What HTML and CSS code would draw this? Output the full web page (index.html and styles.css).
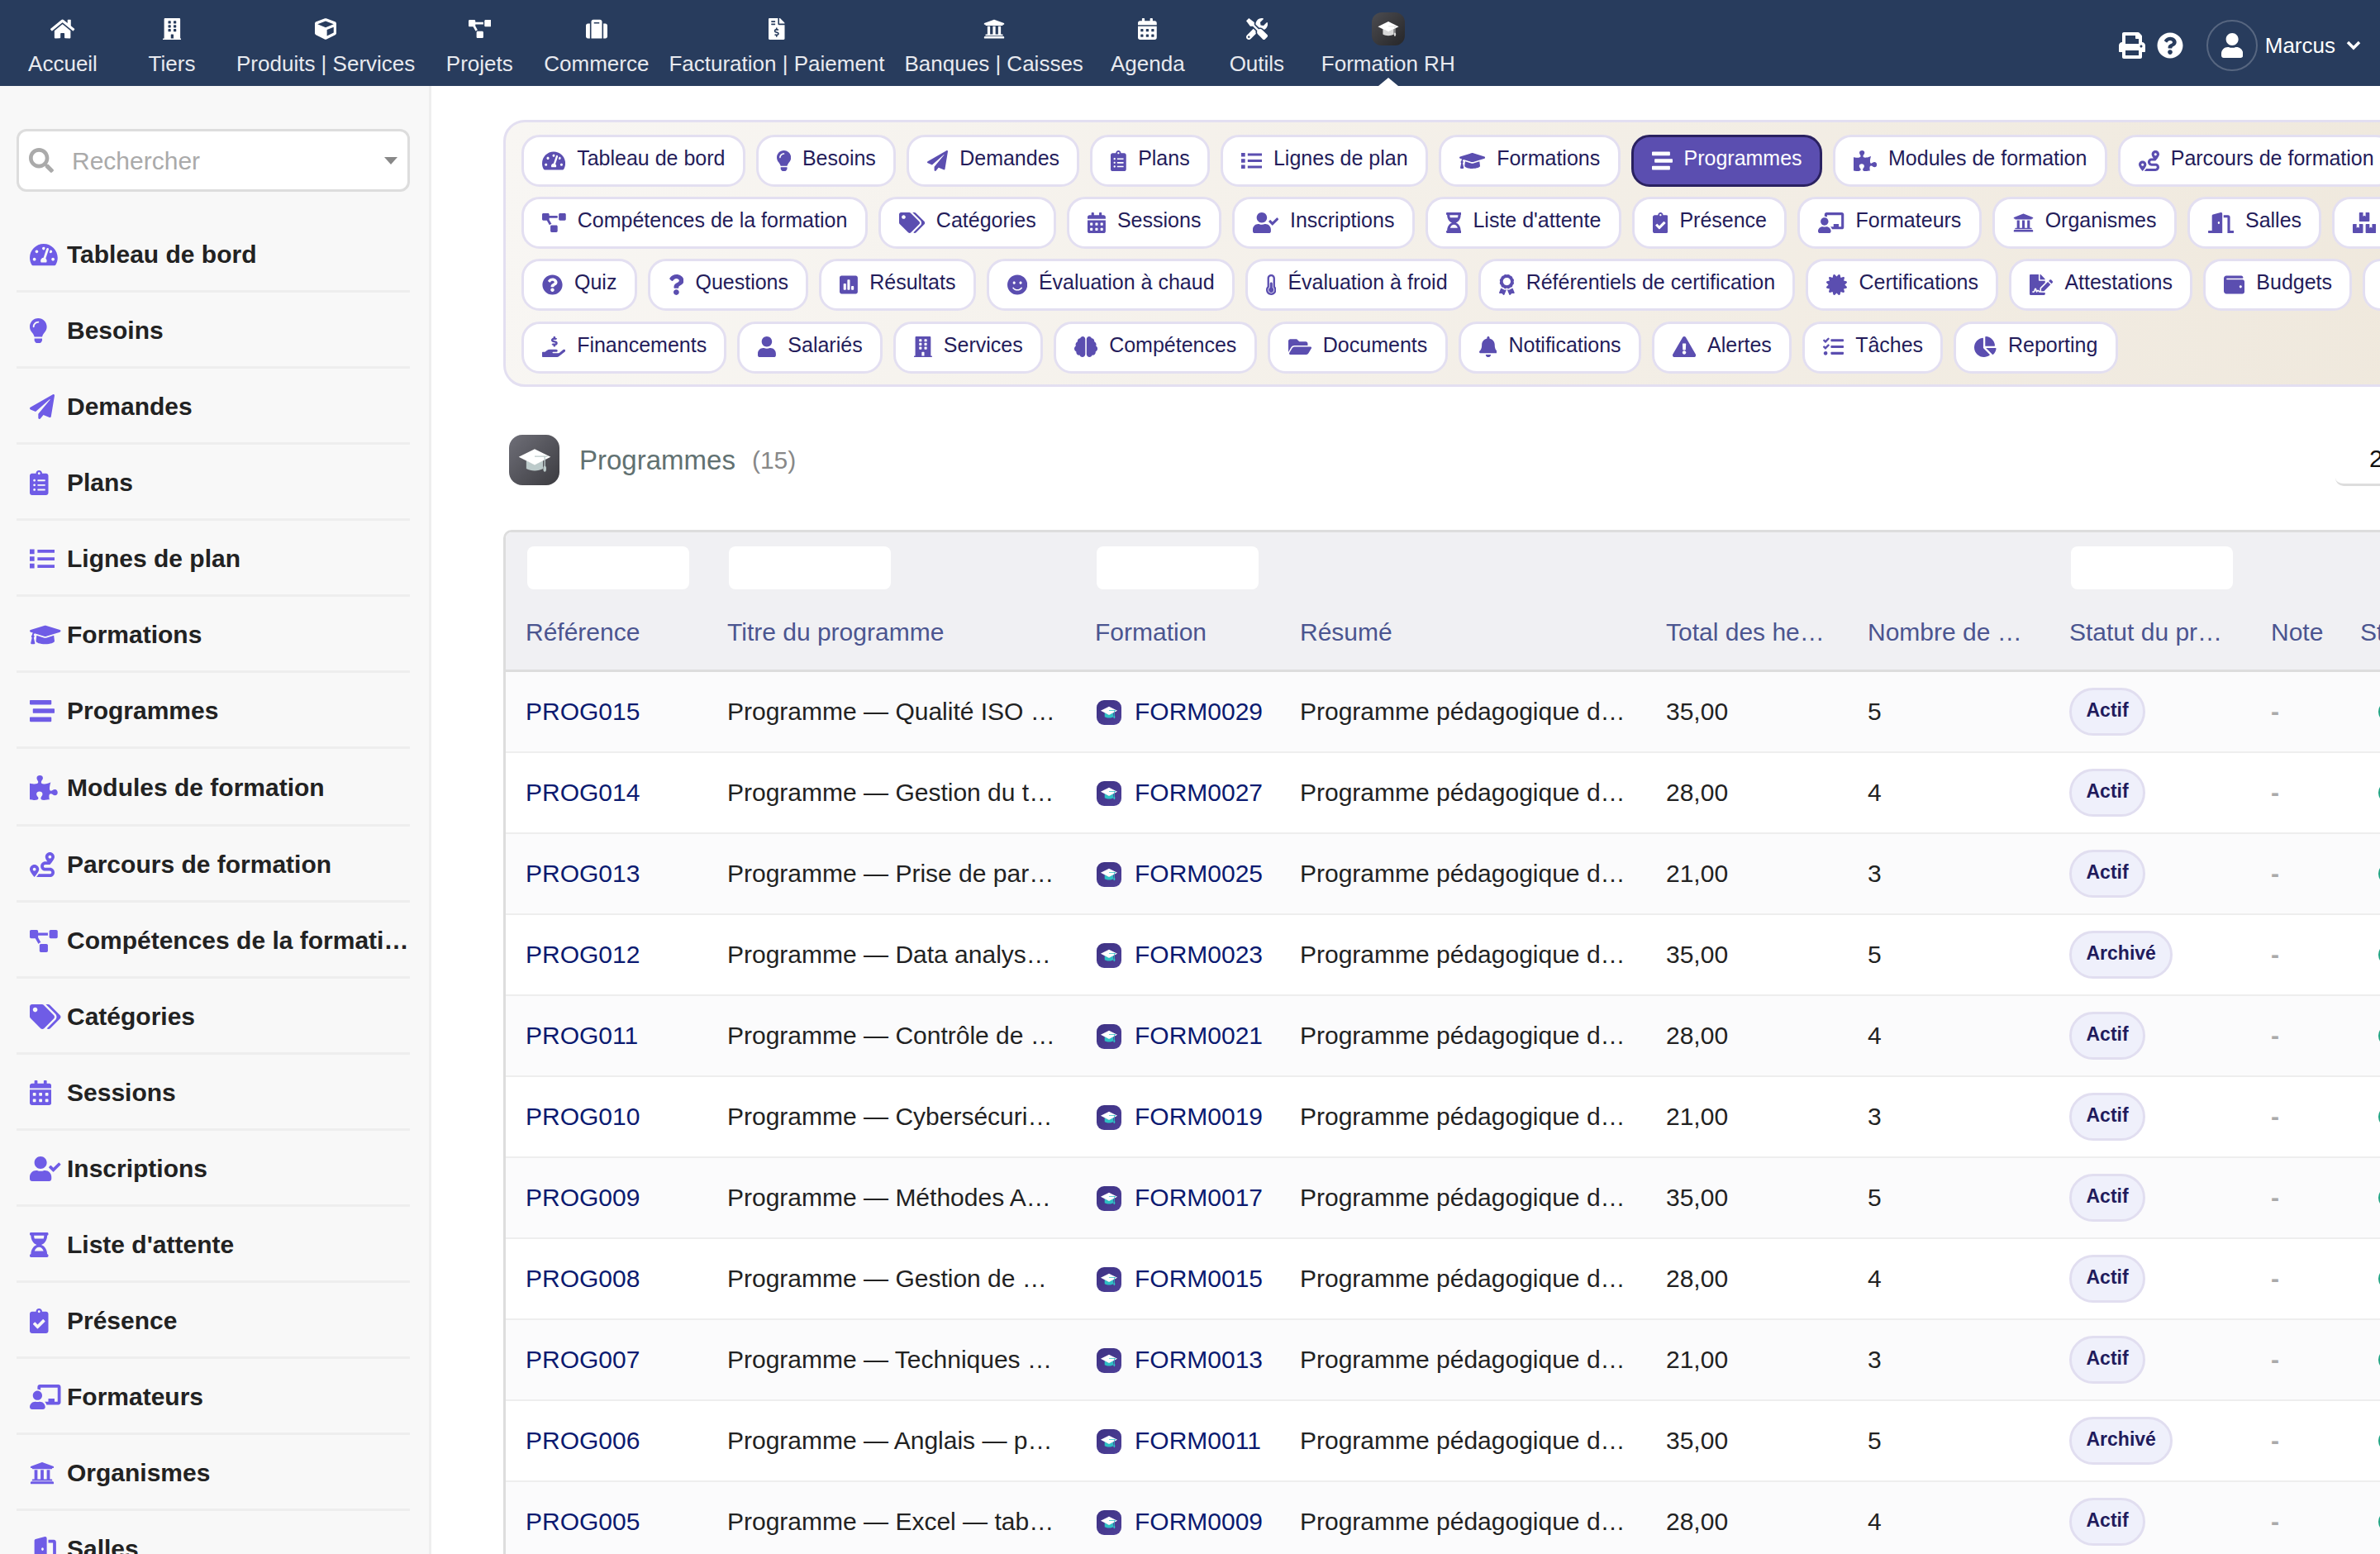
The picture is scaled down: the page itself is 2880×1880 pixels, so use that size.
FILE: index.html
```html
<!DOCTYPE html>
<html lang="fr">
<head>
  <meta charset="utf-8">
  <title>Programmes</title>
  <link rel="stylesheet" href="styles.css">
</head>
<body>

<!-- icon sprite -->
<svg class="sprite" aria-hidden="true">
  <defs>
    <path id="home" d="M280.37 148.26L96 300.11V464a16 16 0 0 0 16 16l112.06-.29a16 16 0 0 0 15.92-16V368a16 16 0 0 1 16-16h64a16 16 0 0 1 16 16v95.64a16 16 0 0 0 16 16.05L464 480a16 16 0 0 0 16-16V300L295.67 148.26a12.19 12.19 0 0 0-15.3 0zM571.6 251.47L488 182.56V44.05a12 12 0 0 0-12-12h-56a12 12 0 0 0-12 12v72.61L318.47 43a48 48 0 0 0-61 0L4.34 251.47a12 12 0 0 0-1.6 16.9l25.5 31A12 12 0 0 0 45.15 301l235.22-193.74a12.19 12.19 0 0 1 15.3 0L530.9 301a12 12 0 0 0 16.9-1.6l25.5-31a12 12 0 0 0-1.7-16.93z"/>
    <path id="building" d="M436 480h-20V24c0-13.255-10.745-24-24-24H56C42.745 0 32 10.745 32 24v456H12c-6.627 0-12 5.373-12 12v20h448v-20c0-6.627-5.373-12-12-12zM128 76c0-6.627 5.373-12 12-12h40c6.627 0 12 5.373 12 12v40c0 6.627-5.373 12-12 12h-40c-6.627 0-12-5.373-12-12V76zm0 96c0-6.627 5.373-12 12-12h40c6.627 0 12 5.373 12 12v40c0 6.627-5.373 12-12 12h-40c-6.627 0-12-5.373-12-12v-40zm52 148h-40c-6.627 0-12-5.373-12-12v-40c0-6.627 5.373-12 12-12h40c6.627 0 12 5.373 12 12v40c0 6.627-5.373 12-12 12zm76 160h-64v-84c0-6.627 5.373-12 12-12h40c6.627 0 12 5.373 12 12v84zm64-172c0 6.627-5.373 12-12 12h-40c-6.627 0-12-5.373-12-12v-40c0-6.627 5.373-12 12-12h40c6.627 0 12 5.373 12 12v40zm0-96c0 6.627-5.373 12-12 12h-40c-6.627 0-12-5.373-12-12v-40c0-6.627 5.373-12 12-12h40c6.627 0 12 5.373 12 12v40zm0-96c0 6.627-5.373 12-12 12h-40c-6.627 0-12-5.373-12-12V76c0-6.627 5.373-12 12-12h40c6.627 0 12 5.373 12 12v40z"/>
    <path id="cube" d="M239.1 6.3l-208 78c-18.7 7-31.1 25-31.1 45v225.1c0 18.2 10.3 34.8 26.5 42.9l208 104c13.5 6.8 29.4 6.8 42.9 0l208-104c16.3-8.1 26.5-24.8 26.5-42.9V129.3c0-20-12.4-37.9-31.1-44.9l-208-78C262 2.2 250 2.2 239.1 6.3zM256 68.4l192 72v1.1l-192 78-192-78v-1.1l192-72zm32 356V275.5l160-65v133.9l-160 80z"/>
    <path id="diagram" d="M384 320H256c-17.67 0-32 14.33-32 32v128c0 17.67 14.33 32 32 32h128c17.67 0 32-14.33 32-32V352c0-17.67-14.33-32-32-32zM192 32c0-17.67-14.33-32-32-32H32C14.33 0 0 14.33 0 32v128c0 17.67 14.33 32 32 32h95.72l73.16 128.04C211.98 300.98 232.4 288 256 288h.28L192 175.51V128h224V64H192V32zM608 0H480c-17.67 0-32 14.33-32 32v128c0 17.67 14.33 32 32 32h128c17.67 0 32-14.33 32-32V32c0-17.67-14.33-32-32-32z"/>
    <path id="suitcase" d="M128 480h256V80c0-26.5-21.5-48-48-48H176c-26.5 0-48 21.5-48 48v400zm64-384h128v32H192V96zm320 80v256c0 26.5-21.5 48-48 48h-48V128h48c26.5 0 48 21.5 48 48zM96 480H48c-26.5 0-48-21.5-48-48V176c0-26.5 21.5-48 48-48h48v352z"/>
    <path id="invoice" d="M377 105L279.1 7c-4.5-4.5-10.6-7-17-7H256v128h128v-6.1c0-6.3-2.5-12.4-7-16.9zm-153 31V0H24C10.7 0 0 10.7 0 24v464c0 13.3 10.7 24 24 24h336c13.3 0 24-10.7 24-24V160H248c-13.2 0-24-10.8-24-24zM64 72c0-4.42 3.58-8 8-8h80c4.42 0 8 3.58 8 8v16c0 4.42-3.58 8-8 8H72c-4.42 0-8-3.58-8-8V72zm0 80v-16c0-4.42 3.58-8 8-8h80c4.42 0 8 3.58 8 8v16c0 4.42-3.58 8-8 8H72c-4.42 0-8-3.58-8-8zm144 263.88V440c0 4.42-3.58 8-8 8h-16c-4.42 0-8-3.58-8-8v-24.29c-11.29-.58-22.27-4.52-31.37-11.35-3.9-2.93-4.1-8.77-.57-12.14l11.75-11.21c2.77-2.64 6.89-2.76 10.13-.73 3.87 2.42 8.26 3.72 12.82 3.72h28.11c6.5 0 11.8-5.92 11.8-13.19 0-5.95-3.61-11.19-8.77-12.73l-45-13.5c-18.59-5.58-31.58-23.42-31.58-43.39 0-24.52 19.05-44.44 42.67-45.07V232c0-4.42 3.58-8 8-8h16c4.42 0 8 3.58 8 8v24.29c11.29.58 22.27 4.51 31.37 11.35 3.9 2.93 4.1 8.77.57 12.14l-11.75 11.21c-2.77 2.64-6.89 2.76-10.13.73-3.87-2.43-8.26-3.72-12.82-3.72h-28.11c-6.5 0-11.8 5.92-11.8 13.19 0 5.95 3.61 11.19 8.77 12.73l45 13.5c18.59 5.58 31.58 23.42 31.58 43.39 0 24.53-19.05 44.44-42.67 45.07z"/>
    <path id="university" d="M496 128v16a8 8 0 0 1-8 8h-24v12c0 6.627-5.373 12-12 12H60c-6.627 0-12-5.373-12-12v-12H24a8 8 0 0 1-8-8v-16a8 8 0 0 1 4.941-7.392l232-88a7.996 7.996 0 0 1 6.118 0l232 88A8 8 0 0 1 496 128zm-24 304H40c-13.255 0-24 10.745-24 24v16a8 8 0 0 0 8 8h464a8 8 0 0 0 8-8v-16c0-13.255-10.745-24-24-24zM96 192v192H60c-6.627 0-12 5.373-12 12v20h416v-20c0-6.627-5.373-12-12-12h-36V192h-64v192h-64V192h-64v192h-64V192H96z"/>
    <path id="calendar" d="M0 464c0 26.5 21.5 48 48 48h352c26.5 0 48-21.5 48-48V192H0v272zm320-196c0-6.6 5.4-12 12-12h40c6.6 0 12 5.4 12 12v40c0 6.6-5.4 12-12 12h-40c-6.6 0-12-5.4-12-12v-40zm0 128c0-6.6 5.4-12 12-12h40c6.6 0 12 5.4 12 12v40c0 6.6-5.4 12-12 12h-40c-6.6 0-12-5.4-12-12v-40zM192 268c0-6.6 5.4-12 12-12h40c6.6 0 12 5.4 12 12v40c0 6.6-5.4 12-12 12h-40c-6.6 0-12-5.4-12-12v-40zm0 128c0-6.6 5.4-12 12-12h40c6.6 0 12 5.4 12 12v40c0 6.6-5.4 12-12 12h-40c-6.6 0-12-5.4-12-12v-40zM64 268c0-6.6 5.4-12 12-12h40c6.6 0 12 5.4 12 12v40c0 6.6-5.4 12-12 12H76c-6.6 0-12-5.4-12-12v-40zm0 128c0-6.6 5.4-12 12-12h40c6.6 0 12 5.4 12 12v40c0 6.6-5.4 12-12 12H76c-6.6 0-12-5.4-12-12v-40zM400 64h-48V16c0-8.8-7.2-16-16-16h-32c-8.8 0-16 7.2-16 16v48H160V16c0-8.8-7.2-16-16-16h-32c-8.8 0-16 7.2-16 16v48H48C21.5 64 0 85.5 0 112v48h448v-48c0-26.5-21.5-48-48-48z"/>
    <path id="tools" d="M501.1 395.7L384 278.6c-23.1-23.1-57.6-27.6-85.4-13.9L192 158.1V96L64 0 0 64l96 128h62.1l106.6 106.6c-13.6 27.8-9.2 62.3 13.9 85.4l117.1 117.1c14.6 14.6 38.2 14.6 52.7 0l52.7-52.7c14.5-14.6 14.5-38.2 0-52.7zM331.7 225c28.3 0 54.9 11 74.9 31l19.4 19.4c15.8-6.9 30.8-16.5 43.8-29.5 37.1-37.1 49.7-89.3 37.9-136.7-2.2-9-13.5-12.1-20.1-5.5l-74.4 74.4-67.9-11.3L334 98.9l74.4-74.4c6.6-6.6 3.4-17.9-5.7-20.2-47.4-11.7-99.6.9-136.6 37.9-28.5 28.5-41.9 66.1-41.2 103.6l82.1 82.1c8.1-1.9 16.5-2.9 24.7-2.9zm-103.9 82l-56.7-56.7L18.7 402.8c-25 25-25 65.5 0 90.5s65.5 25 90.5 0l123.6-123.6c-7.6-19.9-9.9-41.6-5-62.7zM64 472c-13.2 0-24-10.8-24-24 0-13.3 10.7-24 24-24s24 10.7 24 24c0 13.2-10.7 24-24 24z"/>
    <path id="print" d="M448 192V77.25c0-8.49-3.37-16.62-9.37-22.63L393.37 9.37c-6-6-14.14-9.37-22.63-9.37H96C78.33 0 64 14.33 64 32v160c-35.35 0-64 28.65-64 64v112c0 8.84 7.16 16 16 16h48v96c0 17.67 14.33 32 32 32h320c17.67 0 32-14.33 32-32v-96h48c8.84 0 16-7.16 16-16V256c0-35.35-28.65-64-64-64zm-64 256H128v-96h256v96zm0-224H128V64h192v48c0 8.84 7.16 16 16 16h48v96zm48 72c-13.25 0-24-10.75-24-24 0-13.26 10.75-24 24-24s24 10.74 24 24c0 13.25-10.75 24-24 24z"/>
    <path id="help" d="M504 256c0 136.997-111.043 248-248 248S8 392.997 8 256C8 119.083 119.043 8 256 8s248 111.083 248 248zM262.655 90c-54.497 0-89.255 22.957-116.549 63.758-3.536 5.286-2.353 12.415 2.715 16.258l34.699 26.31c5.205 3.947 12.621 3.008 16.665-2.122 17.864-22.658 30.113-35.797 57.303-35.797 20.429 0 45.698 13.148 45.698 32.958 0 14.976-12.363 22.667-32.534 33.976C247.128 238.528 216 254.941 216 296v4c0 6.627 5.373 12 12 12h56c6.627 0 12-5.373 12-12v-1.333c0-28.462 83.186-29.647 83.186-106.667 0-58.002-60.165-102-116.531-102zM256 338c-25.365 0-46 20.635-46 46 0 25.364 20.635 46 46 46s46-20.636 46-46c0-25.365-20.635-46-46-46z"/>
    <path id="user" d="M224 256c70.7 0 128-57.3 128-128S294.7 0 224 0 96 57.3 96 128s57.3 128 128 128zm89.6 32h-16.7c-22.2 10.2-46.9 16-72.9 16s-50.6-5.8-72.9-16h-16.7C60.2 288 0 348.2 0 422.4V464c0 26.5 21.5 48 48 48h352c26.5 0 48-21.5 48-48v-41.6c0-74.2-60.2-134.4-134.4-134.4z"/>
    <path id="search" d="M505 442.7L405.3 343c-4.5-4.5-10.6-7-17-7H372c27.6-35.3 44-79.7 44-128C416 93.1 322.9 0 208 0S0 93.1 0 208s93.1 208 208 208c48.3 0 92.7-16.4 128-44v16.3c0 6.4 2.5 12.5 7 17l99.7 99.7c9.4 9.4 24.6 9.4 33.9 0l28.3-28.3c9.4-9.4 9.4-24.6.1-34zM208 336c-70.7 0-128-57.2-128-128 0-70.7 57.2-128 128-128 70.7 0 128 57.2 128 128 0 70.7-57.2 128-128 128z"/>
    <path id="gauge" d="M288 32C128.94 32 0 160.94 0 320c0 52.8 14.25 102.26 39.06 144.8 5.61 9.62 16.3 15.2 27.44 15.2h443c11.14 0 21.83-5.58 27.44-15.2C561.75 422.26 576 372.8 576 320c0-159.06-128.94-288-288-288zm0 64c14.71 0 26.58 10.13 30.32 23.65-1.11 2.26-2.64 4.23-3.45 6.67l-9.22 27.67c-5.13 3.49-10.97 6.01-17.64 6.01-17.67 0-32-14.33-32-32S270.33 96 288 96zM96 384c-17.67 0-32-14.33-32-32s14.33-32 32-32 32 14.33 32 32-14.33 32-32 32zm48-160c-17.67 0-32-14.33-32-32s14.33-32 32-32 32 14.33 32 32-14.33 32-32 32zm246.77-72.41l-61.33 184C343.13 347.33 352 364.54 352 384c0 11.72-3.38 22.55-8.88 32H232.88c-5.5-9.45-8.88-20.28-8.88-32 0-33.94 26.5-61.43 59.9-63.59l61.34-184.01c4.17-12.56 17.73-19.45 30.36-15.17 12.57 4.19 19.35 17.79 15.17 30.36zm14.66 57.2l15.52-46.55c3.47-1.29 7.13-2.23 11.05-2.23 17.67 0 32 14.33 32 32s-14.33 32-32 32c-11.38-.01-20.89-6.28-26.57-15.22zM480 384c-17.67 0-32-14.33-32-32s14.33-32 32-32 32 14.33 32 32-14.33 32-32 32z"/>
    <path id="bulb" d="M96.06 454.35c.01 6.29 1.87 12.45 5.36 17.69l17.09 25.69a31.99 31.99 0 0 0 26.64 14.28h61.71a31.99 31.99 0 0 0 26.64-14.28l17.09-25.69a31.989 31.989 0 0 0 5.36-17.69l.04-38.35H96.01l.05 38.35zM0 176c0 44.37 16.45 84.85 43.56 115.78 16.52 18.85 42.36 58.23 52.21 91.45.04.26.07.52.11.78h160.24c.04-.26.07-.51.11-.78 9.85-33.22 35.69-72.6 52.21-91.45C335.55 260.85 352 220.37 352 176 352 78.61 272.91-.3 175.45 0 73.44.31 0 82.97 0 176zm176-80c-44.11 0-80 35.89-80 80 0 8.84-7.16 16-16 16s-16-7.16-16-16c0-61.76 50.24-112 112-112 8.84 0 16 7.16 16 16s-7.16 16-16 16z"/>
    <path id="plane" d="M476 3.2L12.5 270.6c-18.1 10.4-15.8 35.6 2.2 43.2L121 358.4l287.3-253.2c5.5-4.9 13.3 2.6 8.6 8.3L176 407v80.5c0 23.6 28.5 32.9 42.5 15.8L282 426l124.6 52.2c14.2 6 30.4-2.9 33-18.2l72-432C515 7.8 493.3-6.8 476 3.2z"/>
    <path id="clip-list" d="M336 64h-80c0-35.3-28.7-64-64-64s-64 28.7-64 64H48C21.5 64 0 85.5 0 112v352c0 26.5 21.5 48 48 48h288c26.5 0 48-21.5 48-48V112c0-26.5-21.5-48-48-48zM96 424c-13.3 0-24-10.7-24-24s10.7-24 24-24 24 10.7 24 24-10.7 24-24 24zm0-96c-13.3 0-24-10.7-24-24s10.7-24 24-24 24 10.7 24 24-10.7 24-24 24zm0-96c-13.3 0-24-10.7-24-24s10.7-24 24-24 24 10.7 24 24-10.7 24-24 24zm96-192c13.3 0 24 10.7 24 24s-10.7 24-24 24-24-10.7-24-24 10.7-24 24-24zm128 368c0 4.4-3.6 8-8 8H168c-4.4 0-8-3.6-8-8v-16c0-4.4 3.6-8 8-8h144c4.4 0 8 3.6 8 8v16zm0-96c0 4.4-3.6 8-8 8H168c-4.4 0-8-3.6-8-8v-16c0-4.4 3.6-8 8-8h144c4.4 0 8 3.6 8 8v16zm0-96c0 4.4-3.6 8-8 8H168c-4.4 0-8-3.6-8-8v-16c0-4.4 3.6-8 8-8h144c4.4 0 8 3.6 8 8v16z"/>
    <path id="list" d="M0 60h96v96H0zM0 208h96v96H0zM0 356h96v96H0zM160 70h352v64H160zM160 224h352v64H160zM160 378h352v64H160z"/>
    <path id="cap" d="M622.34 153.2L343.4 67.5c-15.2-4.67-31.6-4.67-46.79 0L17.66 153.2c-23.54 7.23-23.54 38.36 0 45.59l48.63 14.94c-10.67 13.19-17.23 29.28-17.88 46.9C38.78 266.15 32 276.11 32 288c0 10.78 5.68 19.85 13.86 25.65L20.33 428.53C18.11 438.52 25.71 448 35.94 448h56.11c10.24 0 17.84-9.48 15.62-19.47L82.14 313.65C90.32 307.85 96 298.78 96 288c0-11.57-6.47-21.25-15.66-26.87.76-15.02 8.44-28.3 20.69-36.72L296.6 284.5c9.06 2.78 26.44 6.25 46.79 0l278.95-85.7c23.55-7.24 23.55-38.36 0-45.6zM352.79 315.09c-28.53 8.76-52.84 3.92-65.59 0l-145.02-44.55L128 384c0 35.35 85.96 64 192 64s192-28.65 192-64l-14.18-113.47-145.03 44.56z"/>
    <path id="stream" d="M16 128h416c8.84 0 16-7.16 16-16V48c0-8.84-7.16-16-16-16H16C7.16 32 0 39.16 0 48v64c0 8.84 7.16 16 16 16zm480 80H80c-8.84 0-16 7.16-16 16v64c0 8.84 7.16 16 16 16h416c8.84 0 16-7.16 16-16v-64c0-8.84-7.16-16-16-16zm-64 176H16c-8.84 0-16 7.16-16 16v64c0 8.84 7.16 16 16 16h416c8.84 0 16-7.16 16-16v-64c0-8.84-7.16-16-16-16z"/>
    <path id="puzzle" d="M519.442 288.651c-41.519 0-59.5 31.593-82.058 31.593C377.409 320.244 432 144 432 144s-196.288 80-196.288-3.297c0-35.827 36.288-46.25 36.288-85.985C272 19.216 243.885 0 210.539 0c-34.654 0-66.366 18.891-66.366 56.346 0 41.364 31.711 59.277 31.711 81.75C175.885 207.719 0 166.758 0 166.758v333.237s178.635 41.047 178.635-28.662c0-22.473-40-40.107-40-81.471 0-37.456 29.25-56.346 63.577-56.346 33.673 0 61.788 19.216 61.788 54.717 0 39.735-36.288 50.158-36.288 85.985 0 60.803 129.675 25.73 181.23 25.73 0 0-34.725-120.101 25.827-120.101 35.962 0 46.423 36.152 86.308 36.152C556.712 416 576 387.99 576 354.443c0-34.199-18.962-65.792-56.558-65.792z"/>
    <path id="route" d="M416 320h-96c-17.6 0-32-14.4-32-32s14.4-32 32-32h96s96-107 96-160-43-96-96-96-96 43-96 96c0 25.5 22.2 63.4 45.3 96H320c-52.9 0-96 43.1-96 96s43.1 96 96 96h96c17.6 0 32 14.4 32 32s-14.4 32-32 32H185.5c-16 24.8-33.8 47.7-47.3 64H416c52.9 0 96-43.1 96-96s-43.1-96-96-96zm0-256c17.7 0 32 14.3 32 32s-14.3 32-32 32-32-14.3-32-32 14.3-32 32-32zM96 256c-53 0-96 43-96 96s96 160 96 160 96-107 96-160-43-96-96-96zm0 128c-17.7 0-32-14.3-32-32s14.3-32 32-32 32 14.3 32 32-14.3 32-32 32z"/>
    <path id="tags" d="M497.941 225.941L286.059 14.059A48 48 0 0 0 252.118 0H48C21.49 0 0 21.49 0 48v204.118a48 48 0 0 0 14.059 33.941l211.882 211.882c18.744 18.745 49.136 18.746 67.882 0l204.118-204.118c18.745-18.745 18.745-49.137 0-67.882zM112 160c-26.51 0-48-21.49-48-48s21.49-48 48-48 48 21.49 48 48-21.49 48-48 48zm513.941 133.823L421.823 497.941c-18.745 18.745-49.137 18.745-67.882 0l-.36-.36L527.64 323.522c16.999-16.999 26.36-39.6 26.36-63.64s-9.362-46.641-26.36-63.64L331.397 0h48.721a48 48 0 0 1 33.941 14.059l211.882 211.882c18.745 18.745 18.745 49.137 0 67.882z"/>
    <path id="user-check" d="M224 256c70.7 0 128-57.3 128-128S294.7 0 224 0 96 57.3 96 128s57.3 128 128 128zm89.6 32h-16.7c-22.2 10.2-46.9 16-72.9 16s-50.6-5.8-72.9-16h-16.7C60.2 288 0 348.2 0 422.4V464c0 26.5 21.5 48 48 48h352c26.5 0 48-21.5 48-48v-41.6c0-74.2-60.2-134.4-134.4-134.4zm323-128.4l-27.8-28.1c-4.6-4.7-12.1-4.7-16.8-.1l-104.8 104-45.5-45.8c-4.6-4.7-12.1-4.7-16.8-.1l-28.1 27.9c-4.7 4.6-4.7 12.1-.1 16.8l81.7 82.3c4.6 4.7 12.1 4.7 16.8.1l141.3-140.2c4.6-4.7 4.7-12.2.1-16.8z"/>
    <path id="hourglass" d="M360 0H24C10.745 0 0 10.745 0 24v16c0 13.255 10.745 24 24 24 0 90.965 51.016 167.734 120.842 192C75.016 280.266 24 357.035 24 448c-13.255 0-24 10.745-24 24v16c0 13.255 10.745 24 24 24h336c13.255 0 24-10.745 24-24v-16c0-13.255-10.745-24-24-24 0-90.965-51.016-167.734-120.842-192C308.984 231.734 360 154.965 360 64c13.255 0 24-10.745 24-24V24c0-13.255-10.745-24-24-24zm-75.078 384H99.08c17.059-46.797 52.096-80 92.92-80 40.821 0 75.862 33.196 92.922 80zm.019-256H99.078C91.988 108.548 88 86.748 88 64h208c0 22.805-3.987 44.587-11.059 64z"/>
    <path id="clip-check" d="M336 64h-80c0-35.3-28.7-64-64-64s-64 28.7-64 64H48C21.5 64 0 85.5 0 112v352c0 26.5 21.5 48 48 48h288c26.5 0 48-21.5 48-48V112c0-26.5-21.5-48-48-48zM192 40c13.3 0 24 10.7 24 24s-10.7 24-24 24-24-10.7-24-24 10.7-24 24-24zm121.2 231.8l-143 141.8c-4.7 4.7-12.3 4.6-17-.1l-82.6-83.3c-4.7-4.7-4.6-12.3.1-17L99.1 285c4.7-4.7 12.3-4.6 17 .1l46 46.4 106-105.2c4.7-4.7 12.3-4.6 17 .1l28.2 28.4c4.7 4.8 4.6 12.3-.1 17z"/>
    <path id="teacher" d="M208 352c-2.39 0-4.78.35-7.06 1.09C187.98 357.3 174.35 360 160 360c-14.35 0-27.98-2.7-40.95-6.91-2.28-.74-4.66-1.09-7.05-1.09C49.94 352-.33 402.48 0 464.62.14 490.88 21.73 512 48 512h224c26.27 0 47.86-21.12 48-47.38.33-62.14-49.94-112.62-112-112.62zm-48-32c53.02 0 96-42.98 96-96s-42.98-96-96-96-96 42.98-96 96 42.98 96 96 96zM592 0H208c-26.47 0-48 22.25-48 49.59V96c23.42 0 45.1 6.78 64 17.8V64h352v288h-64v-64H384v64h-76.24c19.1 16.69 33.12 38.73 39.69 64H592c26.47 0 48-22.25 48-49.59V49.59C640 22.25 618.47 0 592 0z"/>
    <path id="door" d="M624 448h-80V113.45C544 86.19 522.47 64 496 64H384v64h96v384h144c8.84 0 16-7.16 16-16v-32c0-8.84-7.16-16-16-16zM312.24 1.01l-192 49.74C105.99 54.44 96 67.7 96 82.92V448H16c-8.84 0-16 7.16-16 16v32c0 8.84 7.16 16 16 16h336V33.18c0-21.58-19.56-37.41-39.76-32.17zM264 288c-13.25 0-24-14.33-24-32s10.75-32 24-32 24 14.33 24 32-10.75 32-24 32z"/>
    <path id="boxes" d="M560 288h-80v96l-32-21.3-32 21.3v-96h-80c-8.8 0-16 7.2-16 16v192c0 8.8 7.2 16 16 16h224c8.8 0 16-7.2 16-16V304c0-8.8-7.2-16-16-16zm-384-64h224c8.8 0 16-7.2 16-16V16c0-8.8-7.2-16-16-16h-80v96l-32-21.3L256 96V0h-80c-8.8 0-16 7.2-16 16v192c0 8.8 7.2 16 16 16zm64 64h-80v96l-32-21.3L96 384v-96H16c-8.8 0-16 7.2-16 16v192c0 8.8 7.2 16 16 16h224c8.8 0 16-7.2 16-16V304c0-8.8-7.2-16-16-16z"/>
    <path id="question" d="M202.021 0C122.202 0 70.503 32.703 29.914 91.026c-7.363 10.58-5.093 25.086 5.178 32.874l43.138 32.709c10.373 7.865 25.132 6.026 33.253-4.148 25.049-31.381 43.63-49.449 82.757-49.449 30.764 0 68.816 19.799 68.816 49.631 0 22.552-18.617 34.134-48.993 51.164-35.423 19.86-82.299 44.576-82.299 106.405V320c0 13.255 10.745 24 24 24h72.471c13.255 0 24-10.745 24-24v-5.773c0-42.86 125.268-44.645 125.268-160.627C377.504 66.256 286.902 0 202.021 0zM192 373.459c-38.196 0-69.271 31.075-69.271 69.271 0 38.195 31.075 69.27 69.271 69.27s69.271-31.075 69.271-69.271-31.075-69.27-69.271-69.27z"/>
    <path id="poll" d="M400 32H48C21.5 32 0 53.5 0 80v352c0 26.5 21.5 48 48 48h352c26.5 0 48-21.5 48-48V80c0-26.5-21.5-48-48-48zM160 368c0 8.84-7.16 16-16 16h-32c-8.84 0-16-7.16-16-16V240c0-8.84 7.16-16 16-16h32c8.84 0 16 7.16 16 16v128zm96 0c0 8.84-7.16 16-16 16h-32c-8.84 0-16-7.16-16-16V144c0-8.84 7.16-16 16-16h32c8.84 0 16 7.16 16 16v224zm96 0c0 8.84-7.16 16-16 16h-32c-8.84 0-16-7.16-16-16v-64c0-8.84 7.16-16 16-16h32c8.84 0 16 7.16 16 16v64z"/>
    <path id="smile" d="M248 8C111 8 0 119 0 256s111 248 248 248 248-111 248-248S385 8 248 8zm80 168c17.7 0 32 14.3 32 32s-14.3 32-32 32-32-14.3-32-32 14.3-32 32-32zm-160 0c17.7 0 32 14.3 32 32s-14.3 32-32 32-32-14.3-32-32 14.3-32 32-32zm194.8 170.2C334.3 380.4 292.5 400 248 400s-86.3-19.6-114.8-53.8c-13.6-16.3 11-36.7 24.6-20.5 22.4 26.9 55.2 42.2 90.2 42.2s67.8-15.4 90.2-42.2c13.4-16.2 38.1 4.2 24.6 20.5z"/>
    <path id="thermo" d="M192 384c0 35.346-28.654 64-64 64s-64-28.654-64-64c0-23.685 12.876-44.349 32-55.417V224c0-17.673 14.327-32 32-32s32 14.327 32 32v104.583c19.124 11.068 32 31.732 32 55.417zm32-84.653c19.912 22.563 32 52.194 32 84.653 0 70.696-57.303 128-128 128-.299 0-.609-.001-.909-.003C56.789 511.509-.357 453.636.002 383.333.166 351.135 12.225 321.755 32 299.347V96c0-53.019 42.981-96 96-96s96 42.981 96 96v203.347zM208 384c0-34.339-19.37-52.19-32-66.502V96c0-26.467-21.533-48-48-48S80 69.533 80 96v221.498c-12.732 14.428-31.825 32.1-31.999 66.08-.224 43.876 35.563 80.116 79.423 80.42L128 464c44.112 0 80-35.888 80-80z"/>
    <path id="award" d="M97.12 362.63c-8.69-8.69-4.16-6.24-25.12-11.85-9.51-2.55-17.87-7.45-25.43-13.32L1.2 448.7c-4.39 10.77 3.81 22.47 15.43 22.03l52.69-2.01L105.56 507c8 8.44 22.04 5.81 26.43-4.96l52.05-127.62c-10.84 6.04-22.87 9.58-35.31 9.58-19.5 0-37.82-7.59-51.61-21.37zM382.8 448.7l-45.37-111.24c-7.56 5.88-15.92 10.77-25.43 13.32-21.07 5.64-16.45 3.18-25.12 11.85-13.79 13.78-32.12 21.37-51.62 21.37-12.44 0-24.47-3.55-35.31-9.58L252 502.04c4.39 10.77 18.44 13.4 26.43 4.96l36.25-38.28 52.69 2.01c11.62.44 19.82-11.27 15.43-22.03zM263 340c15.28-15.55 17.03-14.21 38.79-20.14 13.89-3.79 24.75-14.84 28.47-28.98 7.48-28.4 5.54-24.97 25.95-45.75 10.17-10.35 14.14-25.44 10.42-39.58-7.47-28.38-7.48-24.42 0-52.83 3.72-14.14-.25-29.23-10.42-39.58-20.41-20.78-18.47-17.36-25.95-45.75-3.72-14.14-14.58-25.19-28.47-28.98-27.88-7.61-24.52-5.62-44.95-26.41-10.17-10.35-25-14.4-38.89-10.61-27.87 7.6-23.98 7.61-51.9 0-13.89-3.79-28.72.25-38.89 10.61-20.41 20.78-17.05 18.8-44.94 26.41-13.89 3.79-24.75 14.84-28.47 28.98-7.47 28.39-5.54 24.97-25.95 45.75-10.17 10.35-14.15 25.44-10.42 39.58 7.47 28.36 7.48 24.4 0 52.82-3.72 14.14.25 29.23 10.42 39.59 20.41 20.78 18.47 17.35 25.95 45.75 3.72 14.14 14.58 25.19 28.47 28.98C104.6 325.96 106.27 325 121 340c13.23 13.47 33.84 15.88 49.74 5.82a39.676 39.676 0 0 1 42.53 0c15.89 10.06 36.5 7.65 49.73-5.82zM97.66 175.96c0-53.03 42.24-96.02 94.34-96.02s94.34 42.99 94.34 96.02-42.24 96.02-94.34 96.02-94.34-42.99-94.34-96.02z"/>
    <path id="certificate" d="M458.622 255.92l45.985-45.005c13.708-12.977 7.316-36.039-10.664-40.339l-62.65-15.99 17.661-62.015c4.991-17.838-11.829-34.663-29.661-29.671l-61.994 17.667-15.984-62.671C337.085.197 313.765-6.276 300.99 7.228L256 53.57 211.011 7.229c-12.63-13.351-36.047-7.234-40.325 10.668l-15.984 62.671-61.995-17.667C74.87 57.907 58.056 74.738 63.046 92.572l17.661 62.015-62.65 15.99C.069 174.878-6.31 197.944 7.392 210.915l45.985 45.005-45.985 45.004c-13.708 12.977-7.316 36.039 10.664 40.339l62.65 15.99-17.661 62.015c-4.991 17.838 11.829 34.663 29.661 29.671l61.994-17.667 15.984 62.671c4.439 18.575 27.696 24.018 40.325 10.668L256 458.61l44.989 46.001c12.5 13.488 35.987 7.486 40.325-10.668l15.984-62.671 61.994 17.667c17.836 4.994 34.651-11.837 29.661-29.671l-17.661-62.015 62.65-15.99c17.987-4.302 24.366-27.367 10.664-40.339l-45.984-45.004z"/>
    <path id="signature" d="M218.17 424.14c-2.95-5.92-8.09-6.52-10.17-6.52s-7.22.59-10.02 6.19l-7.67 15.34c-6.37 12.78-25.03 11.37-29.48-2.09L144 386.59l-10.61 31.88c-5.89 17.66-22.38 29.53-41 29.53H80c-8.84 0-16-7.16-16-16s7.16-16 16-16h12.39c4.83 0 9.11-3.08 10.64-7.66l18.19-54.64c3.3-9.81 12.44-16.41 22.78-16.41s19.48 6.59 22.77 16.41l13.88 41.64c19.75-16.19 54.06-9.7 66 14.16 1.89 3.78 5.49 5.95 9.36 6.26v-82.12l128-127.09V160H248c-13.2 0-24-10.8-24-24V0H24C10.7 0 0 10.7 0 24v464c0 13.3 10.7 24 24 24h336c13.3 0 24-10.7 24-24v-40l-128-.11c-16.12-.31-30.58-9.28-37.83-23.75zM384 121.9c0-6.3-2.5-12.4-7-16.9L279.1 7c-4.5-4.5-10.6-7-17-7H256v128h128v-6.1zm-96 225.06V416h68.99l161.68-162.78-67.88-67.88L288 346.96zm280.54-179.63l-31.87-31.87c-9.94-9.94-26.07-9.94-36.01 0l-27.25 27.25 67.88 67.88 27.25-27.26c9.95-9.94 9.95-26.07 0-36z"/>
    <path id="wallet" d="M461.2 128H80c-8.84 0-16-7.16-16-16s7.16-16 16-16h384c8.84 0 16-7.16 16-16 0-26.51-21.49-48-48-48H64C28.65 32 0 60.65 0 96v320c0 35.35 28.65 64 64 64h397.2c28.02 0 50.8-21.53 50.8-48V176c0-26.47-22.78-48-50.8-48zM416 336c-17.67 0-32-14.33-32-32s14.33-32 32-32 32 14.33 32 32-14.33 32-32 32z"/>
    <path id="hand-usd" d="M271.06 144.3l54.27 14.3a8.59 8.59 0 0 1 6.63 8.1c0 4.6-4.09 8.4-9.12 8.4h-35.6a30 30 0 0 1-11.19-2.2c-5.24-2.2-11.28-1.7-15.3 2l-19 17.5a11.68 11.68 0 0 0-2.25 2.66 11.42 11.42 0 0 0 3.88 15.74 83.42 83.42 0 0 0 34.51 11.5V240c0 8.8 7.83 16 17.37 16h17.37c9.55 0 17.38-7.2 17.38-16v-17.6c32.93-3.6 57.84-31 53.5-63-3.15-23-22.46-41.3-46.56-47.7L282.68 97.4a8.59 8.59 0 0 1-6.63-8.1c0-4.6 4.09-8.4 9.12-8.4h35.6A30 30 0 0 1 332 83.1c5.23 2.2 11.28 1.7 15.3-2l19-17.5A11.31 11.31 0 0 0 368.47 61a11.43 11.43 0 0 0-3.84-15.78 83.82 83.82 0 0 0-34.52-11.5V16c0-8.8-7.82-16-17.37-16h-17.37C285.82 0 278 7.2 278 16v17.6c-32.89 3.6-57.85 31-53.51 63 3.14 23 22.51 41.3 46.57 47.7zM565.27 328.1c-11.8-10.7-30.2-10-42.6 0L430.27 402a63.64 63.64 0 0 1-40 14H272a16 16 0 0 1 0-32h78.29c15.9 0 30.71-10.9 33.25-26.6a31.2 31.2 0 0 0 .46-5.46A32 32 0 0 0 352 320H192a117.66 117.66 0 0 0-74.1 26.29L71.4 384H16a16 16 0 0 0-16 16v96a16 16 0 0 0 16 16h356.77a64 64 0 0 0 40-14L564 377a32 32 0 0 0 1.27-48.9z"/>
    <path id="brain" d="M208 0c-29.9 0-54.7 20.5-61.8 48.2-.8 0-1.4-.2-2.2-.2-35.3 0-64 28.7-64 64 0 4.8.6 9.5 1.7 14C52.5 138 32 166.6 32 200c0 12.6 3.2 24.3 8.3 34.9C16.3 248.7 0 274.3 0 304c0 33.3 20.4 61.9 49.4 73.9-.9 4.6-1.4 9.3-1.4 14.1 0 39.8 32.2 72 72 72 4.1 0 8.1-.5 12-1.2 9.6 28.5 36.2 49.2 68 49.2 39.8 0 72-32.2 72-72V64c0-35.3-28.7-64-64-64zm368 304c0-29.7-16.3-55.3-40.3-69.1 5.2-10.6 8.3-22.3 8.3-34.9 0-33.4-20.5-62-49.7-74 1-4.5 1.7-9.2 1.7-14 0-35.3-28.7-64-64-64-.8 0-1.5.2-2.2.2C422.7 20.5 397.9 0 368 0c-35.3 0-64 28.6-64 64v376c0 39.8 32.2 72 72 72 31.8 0 58.4-20.7 68-49.2 3.9.7 7.9 1.2 12 1.2 39.8 0 72-32.2 72-72 0-4.8-.5-9.5-1.4-14.1 29-12 49.4-40.6 49.4-73.9z"/>
    <path id="folder" d="M572.694 292.093L500.27 416.248A63.997 63.997 0 0 1 444.989 448H45.025c-18.523 0-30.064-20.093-20.731-36.093l72.424-124.155A64 64 0 0 1 152 256h399.964c18.523 0 30.064 20.093 20.73 36.093zM152 224h328v-48c0-26.51-21.49-48-48-48H272l-64-64H48C21.49 64 0 85.49 0 112v278.046l69.077-118.418C86.214 242.25 117.989 224 152 224z"/>
    <path id="bell" d="M224 512c35.32 0 63.97-28.65 63.97-64H160.03c0 35.35 28.65 64 63.97 64zm215.39-149.71c-19.32-20.76-55.47-51.99-55.47-154.29 0-77.7-54.48-139.9-127.94-155.16V32c0-17.67-14.32-32-31.98-32s-31.98 14.33-31.98 32v20.84C118.56 68.1 64.08 130.3 64.08 208c0 102.3-36.15 133.53-55.47 154.29-6 6.45-8.66 14.16-8.61 21.71.11 16.4 12.98 32 32.1 32h383.8c19.12 0 32-15.6 32.1-32 .05-7.55-2.61-15.27-8.61-21.71z"/>
    <path id="warning" d="M569.517 440.013C587.975 472.007 564.806 512 527.94 512H48.054c-36.937 0-59.999-40.055-41.577-71.987L246.423 23.985c18.467-32.009 64.72-31.951 83.154 0l239.94 416.028zM288 354c-25.405 0-46 20.595-46 46s20.595 46 46 46 46-20.595 46-46-20.595-46-46-46zm-43.673-165.346l7.418 136c.347 6.364 5.609 11.346 11.982 11.346h48.546c6.373 0 11.635-4.982 11.982-11.346l7.418-136c.375-6.874-5.098-12.654-11.982-12.654h-63.383c-6.884 0-12.356 5.78-11.981 12.654z"/>
    <path id="tasks" d="M139.61 35.5a12 12 0 0 0-17 0L58.93 98.81l-22.7-22.12a12 12 0 0 0-17 0L3.53 92.41a12 12 0 0 0 0 17l47.59 47.4a12.78 12.78 0 0 0 17.61 0l15.59-15.62L156.52 69a12.09 12.09 0 0 0 .09-17zm0 159.19a12 12 0 0 0-17 0l-63.68 63.72-22.7-22.1a12 12 0 0 0-17 0L3.53 252a12 12 0 0 0 0 17L51 316.5a12.77 12.77 0 0 0 17.6 0l15.7-15.69 72.2-72.22a12 12 0 0 0 .09-16.9zM64 368c-26.49 0-48.59 21.5-48.59 48S37.53 464 64 464a48 48 0 0 0 0-96zm432 16H208a16 16 0 0 0-16 16v32a16 16 0 0 0 16 16h288a16 16 0 0 0 16-16v-32a16 16 0 0 0-16-16zm0-320H208a16 16 0 0 0-16 16v32a16 16 0 0 0 16 16h288a16 16 0 0 0 16-16V80a16 16 0 0 0-16-16zm0 160H208a16 16 0 0 0-16 16v32a16 16 0 0 0 16 16h288a16 16 0 0 0 16-16v-32a16 16 0 0 0-16-16z"/>
    <path id="pie" d="M527.79 288H290.5l158.03 158.03c6.04 6.04 15.98 6.53 22.19.68 38.7-36.46 65.32-85.61 73.13-140.86 1.34-9.46-6.51-17.85-16.06-17.85zm-15.83-64.8C503.72 103.74 408.26 8.28 288.8.04 279.68-.59 272 7.1 272 16.24V240h223.77c9.14 0 16.82-7.68 16.19-16.8zM224 288V50.71c0-9.55-8.39-17.4-17.84-16.06C86.99 51.49-4.1 155.6.14 280.37 4.5 408.51 114.83 513.59 243.03 511.98c50.4-.63 96.97-16.87 135.26-44.03 7.9-5.6 8.42-17.23 1.57-24.08L224 288z"/>
    <g id="app-cap">
      <path class="cap-body" d="M28 50l22 11 22-11v22c-12 7-32 7-44 0z"/>
      <path class="cap-top" d="M50 20l42 21-42 21L8 41z"/>
      <path class="cap-body" d="M50 38h34v3H78v24h-3V41H50z"/>
      <ellipse class="cap-body" cx="76.500" cy="72" rx="4" ry="8"/>
    </g>
  </defs>
</svg>

<header class="topbar">
  <nav class="topnav">
    <a class="nav-item" href="#"><span class="nav-icon"><svg class="ic" viewBox="0 0 576 512"><use href="#home"/></svg></span>Accueil</a>
    <a class="nav-item" href="#"><span class="nav-icon"><svg class="ic" viewBox="0 0 448 512"><use href="#building"/></svg></span>Tiers</a>
    <a class="nav-item" href="#"><span class="nav-icon"><svg class="ic" viewBox="0 0 512 512"><use href="#cube"/></svg></span>Produits | Services</a>
    <a class="nav-item" href="#"><span class="nav-icon"><svg class="ic ic-diagram" viewBox="0 0 640 512"><use href="#diagram"/></svg></span>Projets</a>
    <a class="nav-item" href="#"><span class="nav-icon"><svg class="ic" viewBox="0 0 512 512"><use href="#suitcase"/></svg></span>Commerce</a>
    <a class="nav-item" href="#"><span class="nav-icon"><svg class="ic" viewBox="0 0 384 512"><use href="#invoice"/></svg></span>Facturation | Paiement</a>
    <a class="nav-item" href="#"><span class="nav-icon"><svg class="ic" viewBox="0 0 512 512"><use href="#university"/></svg></span>Banques | Caisses</a>
    <a class="nav-item" href="#"><span class="nav-icon"><svg class="ic" viewBox="0 0 448 512"><use href="#calendar"/></svg></span>Agenda</a>
    <a class="nav-item" href="#"><span class="nav-icon"><svg class="ic" viewBox="0 0 512 512"><use href="#tools"/></svg></span>Outils</a>
    <a class="nav-item nav-current" href="#"><span class="nav-icon"><span class="app-icon app-nav"><svg viewBox="0 0 100 100"><use href="#app-cap"/></svg></span></span>Formation RH</a>
  </nav>
  <div class="top-tools">
    <svg class="ic tool" viewBox="0 0 512 512"><use href="#print"/></svg>
    <svg class="ic tool" viewBox="0 0 512 512"><use href="#help"/></svg>
    <span class="avatar"><svg class="ic" viewBox="0 0 448 512"><use href="#user"/></svg></span>
    <span class="username">Marcus</span>
    <svg class="chevron" viewBox="0 0 18 12"><path d="M2 2l7 7 7-7"/></svg>
  </div>
</header>

<div class="layout">
  <aside class="sidebar">
    <div class="search">
      <svg class="ic" viewBox="0 0 512 512"><use href="#search"/></svg>
      <span class="search-text">Rechercher</span>
      <span class="search-caret"></span>
    </div>
    <ul class="side-list">
      <li class="side-item"><span class="side-icon"><svg class="ic" viewBox="0 0 576 512"><use href="#gauge"/></svg></span><span class="side-label">Tableau de bord</span></li>
      <li class="side-item"><span class="side-icon"><svg class="ic" viewBox="0 0 352 512"><use href="#bulb"/></svg></span><span class="side-label">Besoins</span></li>
      <li class="side-item"><span class="side-icon"><svg class="ic" viewBox="0 0 512 512"><use href="#plane"/></svg></span><span class="side-label">Demandes</span></li>
      <li class="side-item"><span class="side-icon"><svg class="ic" viewBox="0 0 384 512"><use href="#clip-list"/></svg></span><span class="side-label">Plans</span></li>
      <li class="side-item"><span class="side-icon"><svg class="ic" viewBox="0 0 512 512"><use href="#list"/></svg></span><span class="side-label">Lignes de plan</span></li>
      <li class="side-item"><span class="side-icon"><svg class="ic" viewBox="0 0 640 512"><use href="#cap"/></svg></span><span class="side-label">Formations</span></li>
      <li class="side-item"><span class="side-icon"><svg class="ic" viewBox="0 0 512 512"><use href="#stream"/></svg></span><span class="side-label">Programmes</span></li>
      <li class="side-item side-tall"><span class="side-icon"><svg class="ic" viewBox="0 0 576 512"><use href="#puzzle"/></svg></span><span class="side-label">Modules de formation</span></li>
      <li class="side-item"><span class="side-icon"><svg class="ic" viewBox="0 0 512 512"><use href="#route"/></svg></span><span class="side-label">Parcours de formation</span></li>
      <li class="side-item"><span class="side-icon"><svg class="ic ic-diagram" viewBox="0 0 640 512"><use href="#diagram"/></svg></span><span class="side-label">Compétences de la formation</span></li>
      <li class="side-item"><span class="side-icon"><svg class="ic" viewBox="0 0 640 512"><use href="#tags"/></svg></span><span class="side-label">Catégories</span></li>
      <li class="side-item"><span class="side-icon"><svg class="ic" viewBox="0 0 448 512"><use href="#calendar"/></svg></span><span class="side-label">Sessions</span></li>
      <li class="side-item"><span class="side-icon"><svg class="ic" viewBox="0 0 640 512"><use href="#user-check"/></svg></span><span class="side-label">Inscriptions</span></li>
      <li class="side-item"><span class="side-icon"><svg class="ic" viewBox="0 0 384 512"><use href="#hourglass"/></svg></span><span class="side-label">Liste d'attente</span></li>
      <li class="side-item"><span class="side-icon"><svg class="ic" viewBox="0 0 384 512"><use href="#clip-check"/></svg></span><span class="side-label">Présence</span></li>
      <li class="side-item"><span class="side-icon"><svg class="ic" viewBox="0 0 640 512"><use href="#teacher"/></svg></span><span class="side-label">Formateurs</span></li>
      <li class="side-item"><span class="side-icon"><svg class="ic" viewBox="0 0 512 512"><use href="#university"/></svg></span><span class="side-label">Organismes</span></li>
      <li class="side-item"><span class="side-icon"><svg class="ic" viewBox="0 0 640 512"><use href="#door"/></svg></span><span class="side-label">Salles</span></li>
    </ul>
  </aside>

  <main class="content">
    <section class="chip-panel">
      <div class="chip-row">
        <a class="chip" href="#"><svg class="ic" viewBox="0 0 576 512"><use href="#gauge"/></svg>Tableau de bord</a>
        <a class="chip" href="#"><svg class="ic" viewBox="0 0 352 512"><use href="#bulb"/></svg>Besoins</a>
        <a class="chip" href="#"><svg class="ic" viewBox="0 0 512 512"><use href="#plane"/></svg>Demandes</a>
        <a class="chip" href="#"><svg class="ic" viewBox="0 0 384 512"><use href="#clip-list"/></svg>Plans</a>
        <a class="chip" href="#"><svg class="ic" viewBox="0 0 512 512"><use href="#list"/></svg>Lignes de plan</a>
        <a class="chip" href="#"><svg class="ic" viewBox="0 0 640 512"><use href="#cap"/></svg>Formations</a>
        <a class="chip chip-active" href="#"><svg class="ic" viewBox="0 0 512 512"><use href="#stream"/></svg>Programmes</a>
        <a class="chip" href="#"><svg class="ic" viewBox="0 0 576 512"><use href="#puzzle"/></svg>Modules de formation</a>
        <a class="chip" href="#"><svg class="ic" viewBox="0 0 512 512"><use href="#route"/></svg>Parcours de formation</a>
      </div>
      <div class="chip-row">
        <a class="chip" href="#"><svg class="ic ic-diagram" viewBox="0 0 640 512"><use href="#diagram"/></svg>Compétences de la formation</a>
        <a class="chip" href="#"><svg class="ic" viewBox="0 0 640 512"><use href="#tags"/></svg>Catégories</a>
        <a class="chip" href="#"><svg class="ic" viewBox="0 0 448 512"><use href="#calendar"/></svg>Sessions</a>
        <a class="chip" href="#"><svg class="ic" viewBox="0 0 640 512"><use href="#user-check"/></svg>Inscriptions</a>
        <a class="chip" href="#"><svg class="ic" viewBox="0 0 384 512"><use href="#hourglass"/></svg>Liste d'attente</a>
        <a class="chip" href="#"><svg class="ic" viewBox="0 0 384 512"><use href="#clip-check"/></svg>Présence</a>
        <a class="chip" href="#"><svg class="ic" viewBox="0 0 640 512"><use href="#teacher"/></svg>Formateurs</a>
        <a class="chip" href="#"><svg class="ic" viewBox="0 0 512 512"><use href="#university"/></svg>Organismes</a>
        <a class="chip" href="#"><svg class="ic" viewBox="0 0 640 512"><use href="#door"/></svg>Salles</a>
        <a class="chip chip-cut" href="#"><svg class="ic" viewBox="0 0 576 512"><use href="#boxes"/></svg></a>
      </div>
      <div class="chip-row">
        <a class="chip" href="#"><svg class="ic" viewBox="0 0 512 512"><use href="#help"/></svg>Quiz</a>
        <a class="chip" href="#"><svg class="ic" viewBox="0 0 384 512"><use href="#question"/></svg>Questions</a>
        <a class="chip" href="#"><svg class="ic" viewBox="0 0 448 512"><use href="#poll"/></svg>Résultats</a>
        <a class="chip" href="#"><svg class="ic" viewBox="0 0 496 512"><use href="#smile"/></svg>Évaluation à chaud</a>
        <a class="chip" href="#"><svg class="ic" viewBox="0 0 256 512"><use href="#thermo"/></svg>Évaluation à froid</a>
        <a class="chip" href="#"><svg class="ic" viewBox="0 0 384 512"><use href="#award"/></svg>Référentiels de certification</a>
        <a class="chip" href="#"><svg class="ic" viewBox="0 0 512 512"><use href="#certificate"/></svg>Certifications</a>
        <a class="chip" href="#"><svg class="ic" viewBox="0 0 576 512"><use href="#signature"/></svg>Attestations</a>
        <a class="chip" href="#"><svg class="ic" viewBox="0 0 512 512"><use href="#wallet"/></svg>Budgets</a>
        <a class="chip chip-cut" href="#"></a>
      </div>
      <div class="chip-row">
        <a class="chip" href="#"><svg class="ic" viewBox="0 0 576 512"><use href="#hand-usd"/></svg>Financements</a>
        <a class="chip" href="#"><svg class="ic" viewBox="0 0 448 512"><use href="#user"/></svg>Salariés</a>
        <a class="chip" href="#"><svg class="ic" viewBox="0 0 448 512"><use href="#building"/></svg>Services</a>
        <a class="chip" href="#"><svg class="ic" viewBox="0 0 576 512"><use href="#brain"/></svg>Compétences</a>
        <a class="chip" href="#"><svg class="ic" viewBox="0 0 576 512"><use href="#folder"/></svg>Documents</a>
        <a class="chip" href="#"><svg class="ic" viewBox="0 0 448 512"><use href="#bell"/></svg>Notifications</a>
        <a class="chip" href="#"><svg class="ic" viewBox="0 0 576 512"><use href="#warning"/></svg>Alertes</a>
        <a class="chip" href="#"><svg class="ic" viewBox="0 0 512 512"><use href="#tasks"/></svg>Tâches</a>
        <a class="chip" href="#"><svg class="ic" viewBox="0 0 544 512"><use href="#pie"/></svg>Reporting</a>
      </div>
    </section>

    <div class="title-row">
      <span class="app-icon app-title"><svg viewBox="0 0 100 100"><use href="#app-cap"/></svg></span>
      <h1 class="page-title">Programmes</h1>
      <span class="page-count">(15)</span>
      <span class="page-size">25</span>
    </div>

    <div class="table-wrap">
      <table class="data-table">
        <colgroup>
          <col class="col-s"><col class="col-l"><col class="col-f"><col class="col-r"><col class="col-s"><col class="col-s"><col class="col-s"><col class="col-n"><col class="col-x">
        </colgroup>
        <thead>
          <tr class="filter-row">
            <th><span class="filter-box"></span></th>
            <th><span class="filter-box"></span></th>
            <th><span class="filter-box"></span></th>
            <th></th><th></th><th></th>
            <th><span class="filter-box"></span></th>
            <th></th><th></th>
          </tr>
          <tr class="label-row">
            <th>Référence</th>
            <th>Titre du programme</th>
            <th>Formation</th>
            <th>Résumé</th>
            <th>Total des heures</th>
            <th>Nombre de séances</th>
            <th>Statut du programme</th>
            <th class="th-note">Note</th>
            <th>Statut</th>
          </tr>
        </thead>
        <tbody>
          <tr><td><a class="ref" href="#">PROG015</a></td><td>Programme — Qualité ISO 9001</td><td><a class="form-link" href="#"><span class="app-icon app-form"><svg viewBox="0 0 100 100"><use href="#app-cap"/></svg></span>FORM0029</a></td><td>Programme pédagogique détaillé</td><td>35,00</td><td>5</td><td><span class="pill">Actif</span></td><td class="dash">-</td><td><span class="dot"></span></td></tr>
          <tr><td><a class="ref" href="#">PROG014</a></td><td>Programme — Gestion du temps</td><td><a class="form-link" href="#"><span class="app-icon app-form"><svg viewBox="0 0 100 100"><use href="#app-cap"/></svg></span>FORM0027</a></td><td>Programme pédagogique détaillé</td><td>28,00</td><td>4</td><td><span class="pill">Actif</span></td><td class="dash">-</td><td><span class="dot"></span></td></tr>
          <tr><td><a class="ref" href="#">PROG013</a></td><td>Programme — Prise de parole</td><td><a class="form-link" href="#"><span class="app-icon app-form"><svg viewBox="0 0 100 100"><use href="#app-cap"/></svg></span>FORM0025</a></td><td>Programme pédagogique détaillé</td><td>21,00</td><td>3</td><td><span class="pill">Actif</span></td><td class="dash">-</td><td><span class="dot"></span></td></tr>
          <tr><td><a class="ref" href="#">PROG012</a></td><td>Programme — Data analyse et reporting</td><td><a class="form-link" href="#"><span class="app-icon app-form"><svg viewBox="0 0 100 100"><use href="#app-cap"/></svg></span>FORM0023</a></td><td>Programme pédagogique détaillé</td><td>35,00</td><td>5</td><td><span class="pill">Archivé</span></td><td class="dash">-</td><td><span class="dot"></span></td></tr>
          <tr><td><a class="ref" href="#">PROG011</a></td><td>Programme — Contrôle de gestion</td><td><a class="form-link" href="#"><span class="app-icon app-form"><svg viewBox="0 0 100 100"><use href="#app-cap"/></svg></span>FORM0021</a></td><td>Programme pédagogique détaillé</td><td>28,00</td><td>4</td><td><span class="pill">Actif</span></td><td class="dash">-</td><td><span class="dot"></span></td></tr>
          <tr><td><a class="ref" href="#">PROG010</a></td><td>Programme — Cybersécurité en entreprise</td><td><a class="form-link" href="#"><span class="app-icon app-form"><svg viewBox="0 0 100 100"><use href="#app-cap"/></svg></span>FORM0019</a></td><td>Programme pédagogique détaillé</td><td>21,00</td><td>3</td><td><span class="pill">Actif</span></td><td class="dash">-</td><td><span class="dot"></span></td></tr>
          <tr><td><a class="ref" href="#">PROG009</a></td><td>Programme — Méthodes Agiles en équipe</td><td><a class="form-link" href="#"><span class="app-icon app-form"><svg viewBox="0 0 100 100"><use href="#app-cap"/></svg></span>FORM0017</a></td><td>Programme pédagogique détaillé</td><td>35,00</td><td>5</td><td><span class="pill">Actif</span></td><td class="dash">-</td><td><span class="dot"></span></td></tr>
          <tr><td><a class="ref" href="#">PROG008</a></td><td>Programme — Gestion de projet</td><td><a class="form-link" href="#"><span class="app-icon app-form"><svg viewBox="0 0 100 100"><use href="#app-cap"/></svg></span>FORM0015</a></td><td>Programme pédagogique détaillé</td><td>28,00</td><td>4</td><td><span class="pill">Actif</span></td><td class="dash">-</td><td><span class="dot"></span></td></tr>
          <tr><td><a class="ref" href="#">PROG007</a></td><td>Programme — Techniques de vente</td><td><a class="form-link" href="#"><span class="app-icon app-form"><svg viewBox="0 0 100 100"><use href="#app-cap"/></svg></span>FORM0013</a></td><td>Programme pédagogique détaillé</td><td>21,00</td><td>3</td><td><span class="pill">Actif</span></td><td class="dash">-</td><td><span class="dot"></span></td></tr>
          <tr><td><a class="ref" href="#">PROG006</a></td><td>Programme — Anglais — professionnel</td><td><a class="form-link" href="#"><span class="app-icon app-form"><svg viewBox="0 0 100 100"><use href="#app-cap"/></svg></span>FORM0011</a></td><td>Programme pédagogique détaillé</td><td>35,00</td><td>5</td><td><span class="pill">Archivé</span></td><td class="dash">-</td><td><span class="dot"></span></td></tr>
          <tr><td><a class="ref" href="#">PROG005</a></td><td>Programme — Excel — tableaux croisés</td><td><a class="form-link" href="#"><span class="app-icon app-form"><svg viewBox="0 0 100 100"><use href="#app-cap"/></svg></span>FORM0009</a></td><td>Programme pédagogique détaillé</td><td>28,00</td><td>4</td><td><span class="pill">Actif</span></td><td class="dash">-</td><td><span class="dot"></span></td></tr>
        </tbody>
      </table>
    </div>
  </main>
</div>

</body>
</html>
```

FILE: styles.css
```css
* { box-sizing: border-box; }

html, body { margin: 0; padding: 0; height: 100%; overflow: hidden; }

body {
    font-family: "Liberation Sans", Arial, sans-serif;
    font-size: 30px;
    color: #222;
    background: #fff;
}

a { color: inherit; text-decoration: none; }
ul { margin: 0; padding: 0; list-style: none; }

.sprite { display: none; }
.ic { display: block; flex: none; fill: currentColor; width: auto; }

/* top bar */
.topbar {
    display: flex;
    justify-content: space-between;
    height: 104px;
    padding-left: 10px;
    background: #283c5d;
    color: #fff;
}

.topnav { display: flex; }

.nav-item {
    position: relative;
    display: flex;
    flex-direction: column;
    align-items: center;
    min-width: 132px;
    padding: 15px 12px 0;
    font-size: 26px;
    line-height: 30px;
    color: #e8eaef;
    white-space: nowrap;
}

.nav-icon {
    display: flex;
    align-items: center;
    justify-content: center;
    height: 40px;
    margin-bottom: 7px;
    color: #fff;
}
.nav-icon .ic { height: 26px; }
.nav-icon .ic-diagram { height: 22px; }

.nav-current::after {
    content: "";
    position: absolute;
    left: 50%;
    bottom: 0;
    margin-left: -12px;
    border-left: 12px solid transparent;
    border-right: 12px solid transparent;
    border-bottom: 10px solid #fff;
}

.top-tools {
    display: flex;
    align-items: center;
    padding-right: 23px;
    margin-top: 7px;
    align-self: flex-start;
    height: 96px;
}
.tool { height: 32px; margin-right: 14px; }
.tool + .tool { margin-right: 28px; }

.avatar {
    display: flex;
    align-items: center;
    justify-content: center;
    width: 62px;
    height: 62px;
    border: 2px solid rgba(255, 255, 255, .22);
    border-radius: 50%;
    margin-right: 9px;
}
.avatar .ic { height: 30px; }

.username { font-size: 26px; margin-right: 13px; }

.chevron { width: 18px; height: 12px; fill: none; stroke: #fff; stroke-width: 3.5; }

/* app icons */
.app-icon { display: flex; align-items: center; justify-content: center; flex: none; }
.app-icon svg { display: block; }
.cap-top { fill: var(--cap-top, #fff); }
.cap-body { fill: var(--cap-body, #fff); }

.app-nav {
    width: 40px;
    height: 40px;
    border-radius: 12px;
    background: linear-gradient(135deg, #4c4c50, #262628);
    --cap-body: #d8d8d8;
}
.app-nav svg { width: 30px; height: 30px; }

.app-title {
    width: 61px;
    height: 61px;
    border-radius: 16px;
    background: linear-gradient(135deg, #6f6f78, #3b3b40);
    --cap-body: #bccaca;
}
.app-title svg { width: 46px; height: 46px; }

.app-form {
    width: 30px;
    height: 30px;
    margin-top: 3px;
    border-radius: 9px;
    background: linear-gradient(135deg, #3d3183, #4f4199);
    --cap-body: #2fc0c4;
}
.app-form svg { width: 24px; height: 24px; }

/* layout */
.layout { display: flex; height: calc(100% - 104px); }

.sidebar {
    flex: none;
    width: 522px;
    padding: 52px 23px 0 20px;
    background: #f8f8f8;
    border-right: 3px solid #eee;
    overflow: hidden;
}

.search {
    display: flex;
    align-items: center;
    height: 76px;
    padding: 0 12px 0 12px;
    background: #fff;
    border: 3px solid #ddd;
    border-radius: 12px;
    color: #aaa;
}
.search .ic { height: 30px; margin-right: 22px; }
.search-text { flex: 1; padding-top: 2px; font-size: 30px; }
.search-caret {
    border-left: 8px solid transparent;
    border-right: 8px solid transparent;
    border-top: 9px solid #888;
}

.side-list { margin-top: 30px; }

.side-item {
    display: flex;
    align-items: center;
    height: 92px;
    padding: 3px 0 0 16px;
    border-bottom: 3px solid #eee;
}
.side-tall { height: 94px; }

.side-icon { flex: none; width: 45px; color: #6f5ce6; }
.side-icon .ic { height: 30px; }
.side-icon .ic-diagram { height: 27px; }

.side-label {
    font-weight: 700;
    font-size: 30px;
    color: #222;
    white-space: nowrap;
    overflow: hidden;
    text-overflow: ellipsis;
}

/* content */
.content {
    flex: 1;
    min-width: 0;
    padding: 41px 0 0 87px;
    overflow: hidden;
}

.chip-panel {
    display: flex;
    flex-direction: column;
    gap: 12.200px;
    width: 2400px;
    padding: 15px 0 13px 19px;
    background: linear-gradient(100deg, #f8f6f3, #efe8dc);
    border: 3px solid #e3dff1;
    border-radius: 26px 0 0 26px;
}

.chip-row { display: flex; gap: 13px; }

.chip {
    display: flex;
    flex: none;
    align-items: center;
    gap: 14px;
    height: 63px;
    padding: 0 21.300px 6px 22px;
    background: #fff;
    border: 3px solid #e3dff1;
    border-radius: 22px;
    font-size: 25px;
    color: #241c5a;
    white-space: nowrap;
}
.chip .ic { height: 25px; margin-top: 5px; color: #5b4eb0; }
.chip .ic-diagram { height: 23px; }

.chip-active {
    background: #5b4eb0;
    border-color: #2a2160;
    color: #fff;
}
.chip-active .ic { color: #fff; }

.chip-cut { width: 120px; }

.title-row {
    display: flex;
    align-items: center;
    width: 2271px;
    height: 62px;
    margin-top: 58px;
    padding-left: 7px;
}

.page-title {
    margin: 0 0 0 24px;
    font-size: 33px;
    font-weight: 400;
    color: #617171;
}
.page-count { margin-left: 20px; font-size: 30px; color: #888; }

.page-size {
    margin-left: auto;
    align-self: stretch;
    display: flex;
    align-items: center;
    width: 54px;
    padding-left: 41px;
    font-size: 30px;
    color: #111;
    border-bottom: 3px solid #ddd;
    border-bottom-left-radius: 10px;
    overflow: hidden;
}

.table-wrap {
    width: 2400px;
    margin-top: 53px;
    border-left: 3px solid #ddd;
    border-top: 3px solid #ddd;
    border-top-left-radius: 10px;
    overflow: hidden;
}

.data-table {
    width: 2400px;
    table-layout: fixed;
    border-collapse: separate;
    border-spacing: 0;
}

.col-s { width: 244px; }
.col-l { width: 445px; }
.col-f { width: 248px; }
.col-r { width: 443px; }
.col-n { width: 108px; }

.data-table th,
.data-table td {
    padding: 0 24px;
    text-align: left;
    white-space: nowrap;
    overflow: hidden;
    text-overflow: ellipsis;
    font-size: 30px;
}
.data-table td:nth-child(2) { padding-right: 22px; }
.data-table .th-note { padding-right: 8px; }

.data-table thead { background: #f0f0f3; }

.filter-row { height: 84px; }
.data-table .filter-row th { vertical-align: top; padding-top: 17px; }
.filter-box {
    display: block;
    width: 196px;
    height: 52px;
    margin-left: 2px;
    background: #fff;
    border-radius: 8px;
}

.label-row { height: 85px; }
.data-table .label-row th {
    font-weight: 400;
    color: #4b5590;
    border-bottom: 3px solid #ddd;
    padding-bottom: 8px;
}

.data-table tbody tr { height: 98px; }
.data-table tbody tr:nth-child(odd) { background: #fbfbfc; }
.data-table td { border-bottom: 2px solid #eee; color: #222; }

.ref { color: #0b1a70; }

.form-link {
    display: flex;
    align-items: center;
    gap: 16px;
    margin-left: 2px;
    color: #0b1a70;
}

.pill {
    display: inline-block;
    height: 58px;
    padding: 0 17.500px;
    line-height: 49px;
    background: #eff0fb;
    border: 3px solid #e1def0;
    border-radius: 29px;
    font-size: 23px;
    font-weight: 700;
    color: #211b5c;
}

.data-table .dash { color: #aaa; font-weight: 700; }

.dot {
    display: block;
    width: 26px;
    height: 26px;
    margin-left: 22px;
    border-radius: 50%;
    background: #23a584;
}
```
